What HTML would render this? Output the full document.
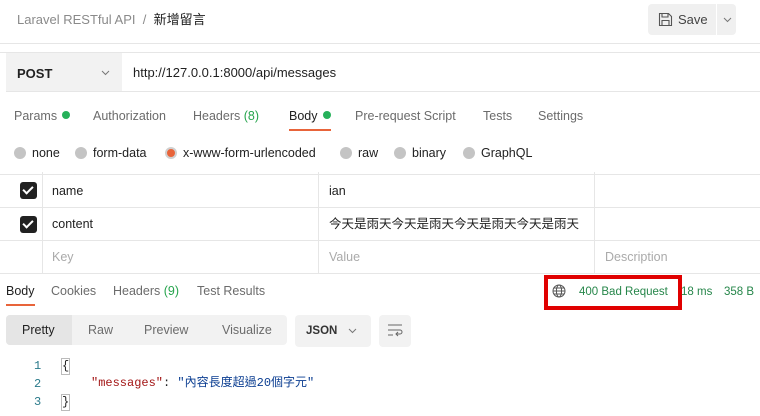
<!DOCTYPE html><html><head><meta charset="utf-8"><style>
*{margin:0;padding:0;box-sizing:border-box}
body{width:760px;height:416px;overflow:hidden;background:#fff;font-family:"Liberation Sans","Noto Sans CJK TC",sans-serif;font-size:12.5px;color:#212121;position:relative}
.a{position:absolute;white-space:nowrap;line-height:15px}
.g{color:#6b6b6b}
.dot{display:inline-block;width:8px;height:8px;border-radius:50%;background:#26b15a;margin-left:5px;vertical-align:1px}
.r{display:inline-block;width:12px;height:12px;border-radius:50%;background:#c4c4c4;vertical-align:-2px;margin-right:6px}
.hl{position:absolute;height:1px;background:#e6e6e6}
.vl{position:absolute;width:1px;background:#e6e6e6}
.cb{position:absolute;width:17px;height:17px;border-radius:3px;background:#212121;left:20px}
.cb:after{content:"";position:absolute;left:5px;top:2px;width:4px;height:8px;border:solid #fff;border-width:0 2px 2px 0;transform:rotate(45deg)}
.mono{font-family:"Liberation Mono","Noto Sans CJK TC",monospace;font-size:12px}
.chev{position:absolute}
</style></head><body>
<div class="a" style="left:17px;top:12px;color:#8a8a8a;font-size:13px">Laravel RESTful API&nbsp; / &nbsp;<span style="color:#212121">新增留言</span></div>
<div class="a" style="left:648px;top:4px;width:88px;height:31px;background:#f0f0f0;border-radius:4px"></div>
<div class="a" style="left:716px;top:4px;width:1px;height:31px;background:#fff"></div>
<svg class="a" style="left:658px;top:12px" width="15" height="15" viewBox="0 0 15 15" fill="none" stroke="#555" stroke-width="1.1"><path d="M1.5 1.5h9l3 3v9h-12z M4 1.5v3.5h6v-3.5 M4 13.5v-5h7v5"/></svg>
<div class="a" style="left:678px;top:12px;font-size:13px;color:#444">Save</div>
<svg class="chev" style="left:723px;top:17px" width="9" height="6" viewBox="0 0 9 6" fill="none" stroke="#777"><path d="M1 1l3.5 3.5L8 1"/></svg>
<div class="hl" style="left:0;top:43px;width:760px"></div>
<div class="hl" style="left:0;top:52px;width:760px"></div>
<div class="a" style="left:6px;top:53px;width:116px;height:38px;background:#f2f2f2"></div>
<div class="a" style="left:17px;top:66px;font-weight:bold;font-size:13px">POST</div>
<svg class="chev" style="left:101px;top:70px" width="9" height="6" viewBox="0 0 9 6" fill="none" stroke="#777"><path d="M1 1l3.5 3.5L8 1"/></svg>
<div class="a" style="left:133px;top:65px;font-size:13px">http://127.0.0.1:8000/api/messages</div>
<div class="hl" style="left:6px;top:91px;width:754px"></div>
<div class="a g" style="left:14px;top:109px">Params<span class="dot"></span></div>
<div class="a g" style="left:93px;top:109px">Authorization</div>
<div class="a g" style="left:193px;top:109px">Headers <span style="color:#26a44d">(8)</span></div>
<div class="a" style="left:289px;top:109px">Body<span class="dot"></span></div>
<div class="a" style="left:289px;top:129px;width:42px;height:2px;background:#e8643a"></div>
<div class="a g" style="left:355px;top:109px">Pre-request Script</div>
<div class="a g" style="left:483px;top:109px">Tests</div>
<div class="a g" style="left:538px;top:109px">Settings</div>
<div class="a" style="left:14px;top:146px"><span class="r"></span>none</div>
<div class="a" style="left:75px;top:146px"><span class="r"></span>form-data</div>
<div class="a" style="left:165px;top:146px"><span class="r" style="background:#e8643a;border:2.5px solid #d0d0d0"></span>x-www-form-urlencoded</div>
<div class="a" style="left:340px;top:146px"><span class="r"></span>raw</div>
<div class="a" style="left:394px;top:146px"><span class="r"></span>binary</div>
<div class="a" style="left:463px;top:146px"><span class="r"></span>GraphQL</div>
<div class="hl" style="left:0;top:174px;width:760px"></div>
<div class="hl" style="left:0;top:207px;width:760px"></div>
<div class="hl" style="left:0;top:240px;width:760px"></div>
<div class="hl" style="left:0;top:273px;width:760px"></div>
<div class="vl" style="left:42px;top:172px;height:102px"></div>
<div class="vl" style="left:318px;top:172px;height:102px"></div>
<div class="vl" style="left:594px;top:172px;height:102px"></div>
<div class="cb" style="top:182px"></div>
<div class="cb" style="top:216px"></div>
<div class="a" style="left:52px;top:184px">name</div>
<div class="a" style="left:329px;top:184px">ian</div>
<div class="a" style="left:52px;top:217px">content</div>
<div class="a" style="left:329px;top:217px">今天是雨天今天是雨天今天是雨天今天是雨天</div>
<div class="a" style="left:52px;top:250px;color:#aaa">Key</div>
<div class="a" style="left:329px;top:250px;color:#aaa">Value</div>
<div class="a" style="left:605px;top:250px;color:#aaa">Description</div>
<div class="a" style="left:6px;top:284px">Body</div>
<div class="a" style="left:6px;top:304px;width:29px;height:2px;background:#e8643a"></div>
<div class="a g" style="left:51px;top:284px">Cookies</div>
<div class="a g" style="left:113px;top:284px">Headers <span style="color:#26a44d">(9)</span></div>
<div class="a g" style="left:197px;top:284px">Test Results</div>
<div class="a" style="left:544px;top:275px;width:138px;height:35px;border:4px solid #e00000"></div>
<svg class="a" style="left:552px;top:284px" width="14" height="14" viewBox="0 0 14 14" fill="none" stroke="#555" stroke-width="1"><circle cx="7" cy="7" r="6"/><ellipse cx="7" cy="7" rx="2.6" ry="6"/><path d="M1 7h12M2 4h10M2 10h10"/></svg>
<div class="a" style="left:579px;top:285px;color:#26864a;font-size:11.5px">400 Bad Request</div>
<div class="a" style="left:681px;top:285px;color:#26864a;font-size:11.5px">18 ms</div>
<div class="a" style="left:724px;top:285px;color:#26864a;font-size:11.5px">358 B</div>
<div class="a" style="left:6px;top:315px;width:281px;height:30px;background:#f2f2f2;border-radius:4px"></div>
<div class="a" style="left:6px;top:315px;width:66px;height:30px;background:#e5e5e5;border-radius:4px 0 0 4px"></div>
<div class="a" style="left:22px;top:323px">Pretty</div>
<div class="a g" style="left:88px;top:323px">Raw</div>
<div class="a g" style="left:144px;top:323px">Preview</div>
<div class="a g" style="left:222px;top:323px">Visualize</div>
<div class="a" style="left:295px;top:315px;width:76px;height:32px;background:#f2f2f2;border-radius:4px"></div>
<div class="a" style="left:306px;top:324px;font-weight:bold;font-size:11.5px;color:#333">JSON</div>
<svg class="chev" style="left:348px;top:328px" width="9" height="6" viewBox="0 0 9 6" fill="none" stroke="#777"><path d="M1 1l3.5 3.5L8 1"/></svg>
<div class="a" style="left:379px;top:315px;width:32px;height:32px;background:#f2f2f2;border-radius:4px"></div>
<svg class="a" style="left:387px;top:323px" width="16" height="14" viewBox="0 0 16 14" fill="none" stroke="#666" stroke-width="1"><path d="M1 2h14M1 7h12a2 2 0 0 1 0 4h-4M11 9l-2 2 2 2M1 12h5"/></svg>
<div class="a mono" style="left:34px;top:359px;color:#2a7a8a">1</div>
<div class="a mono" style="left:34px;top:377px;color:#2a7a8a">2</div>
<div class="a mono" style="left:34px;top:395px;color:#2a7a8a">3</div>
<div class="a mono" style="left:62px;top:359px;outline:1px solid #bbb">{</div>
<div class="a mono" style="left:62px;top:395px;outline:1px solid #bbb">}</div>
<div class="a mono" style="left:91px;top:376px"><span style="color:#a31515">"messages"</span>: <span style="color:#0a3d91">"內容長度超過20個字元"</span></div>
</body></html>
